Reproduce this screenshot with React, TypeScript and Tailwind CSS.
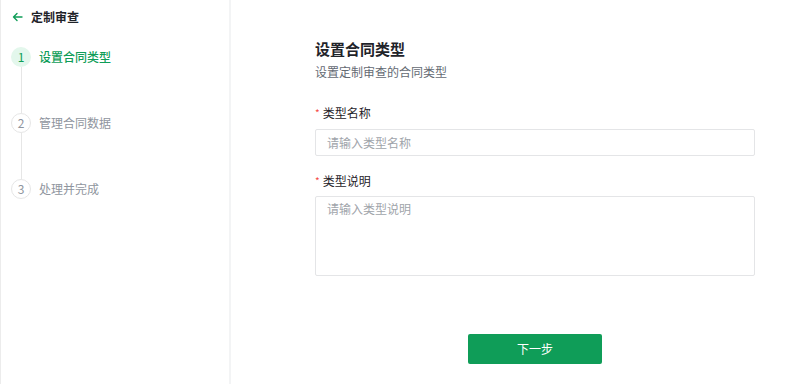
import React from "react";

const steps = [
  { n: 1, label: "设置合同类型", active: true },
  { n: 2, label: "管理合同数据", active: false },
  { n: 3, label: "处理并完成", active: false },
];

export default function App() {
  return (
    <div
      className="flex h-[384px] w-[791px] bg-[#f3f4f5] text-[#1f2329]"
      style={{ fontFamily: '"Noto Sans CJK SC", "Noto Sans", sans-serif' }}
    >
      {/* Sidebar */}
      <aside className="flex w-[229px] shrink-0 flex-col border-l border-[#ececec] bg-white">
        <div className="flex h-[33px] items-center gap-[8px] pl-[11px]">
          <svg width="11" height="10" viewBox="0 0 11 10" fill="none" stroke="#0f9d58" strokeWidth="1.4" strokeLinecap="round" strokeLinejoin="round">
            <path d="M10 5H1.5M5 1.5L1.5 5L5 8.5" />
          </svg>
          <span className="text-[12px] font-bold text-[#1f2329]">定制审查</span>
        </div>
        <div className="mt-[14px] flex flex-col pl-[10px]">
          {steps.map((s, i) => (
            <div key={s.n} className="flex flex-col">
              <div className="flex h-[20px] items-center gap-[8px]">
                <div
                  className={
                    s.active
                      ? "flex h-[20px] w-[20px] items-center justify-center rounded-full bg-[#e3f7ec] text-[12px] text-[#0f9d58]"
                      : "flex h-[20px] w-[20px] items-center justify-center rounded-full border border-[#e6e6e6] text-[12px] text-[#8f959e]"
                  }
                >
                  {s.n}
                </div>
                <span
                  className={
                    s.active
                      ? "text-[12px] font-medium text-[#0f9d58]"
                      : "text-[12px] text-[#8f959e]"
                  }
                >
                  {s.label}
                </span>
              </div>
              {i < steps.length - 1 && (
                <div className="ml-[9.5px] h-[46px] w-px bg-[#e6e6e6]" />
              )}
            </div>
          ))}
        </div>
      </aside>

      {/* Main */}
      <main className="ml-[2px] flex flex-1 bg-white pl-[84px]">
        <div className="mt-[38px] flex w-[440px] flex-col">
          <h1 className="text-[15px] font-bold leading-[22px] text-[#1f2329]">设置合同类型</h1>
          <p className="mt-[3px] text-[12px] leading-[18px] text-[#646a73]">设置定制审查的合同类型</p>

          <label className="mt-[23px] flex items-center text-[12px] leading-[18px] text-[#1f2329]">
            <span className="mr-[3px] text-[10px] text-[#f54a45]">*</span>类型名称
          </label>
          <input
            className="mt-[7px] h-[27px] w-full rounded-[2px] border border-[#e4e5e7] px-[11px] text-[12px] outline-none placeholder:text-[#a0a4aa]"
            placeholder="请输入类型名称"
          />

          <label className="mt-[16px] flex items-center text-[12px] leading-[18px] text-[#1f2329]">
            <span className="mr-[3px] text-[10px] text-[#f54a45]">*</span>类型说明
          </label>
          <textarea
            className="mt-[6px] h-[80px] w-full resize-none rounded-[2px] border border-[#e4e5e7] px-[11px] py-[3px] text-[12px] leading-[18px] outline-none placeholder:text-[#a0a4aa]"
            placeholder="请输入类型说明"
          />

          <div className="mt-[58px] flex justify-center">
            <button className="h-[30px] w-[134px] rounded-[2px] bg-[#0f9d58] text-[12px] text-white">
              下一步
            </button>
          </div>
        </div>
      </main>
    </div>
  );
}
